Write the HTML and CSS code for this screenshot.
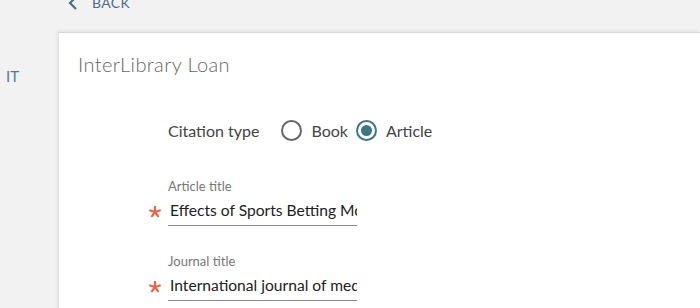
FILE: index.html
```html
<!doctype html>
<html lang="en">

<head>
    <meta charset="utf-8" />
    <meta name="viewport" content="width=device-width, initial-scale=1.0" />
    <title>InterLibrary Loan</title>
    <link rel="stylesheet" href="styles.css">
</head>

<body>
    <div class="top-bar">
        <a class="back-link" href="#">
            <svg class="back-icon" width="10" height="14" viewBox="0 0 10 14">
                <path d="M8 1 L2 7 L8 13" fill="none" stroke="currentColor" stroke-width="2.2" />
            </svg>
            BACK
        </a>
    </div>

    <div class="layout">
        <div class="side-nav">
            <div class="side-item">IT</div>
        </div>

        <div class="panel">
            <h2 class="panel-title">InterLibrary Loan</h2>

            <form class="ill-form">
                <div class="citation-row">
                    <span class="citation-label">Citation type</span>
                    <label class="radio">
                        <span class="radio-circle"></span>
                        Book
                    </label>
                    <label class="radio checked">
                        <span class="radio-circle"></span>
                        Article
                    </label>
                </div>

                <div class="field">
                    <div class="field-label">Article title</div>
                    <div class="field-row">
                        <svg class="required" width="12" height="12" viewBox="0 0 12 12" aria-label="required">
                            <path d="M6 1 V6 M6 6 L10.8 4.5 M6 6 L1.2 4.5 M6 6 L9 10.2 M6 6 L3 10.2" stroke="currentColor" stroke-width="2.2" stroke-linecap="round" fill="none" />
                        </svg>
                        <div class="field-input">Effects of Sports Betting Motivation on Behavioral Intention</div>
                    </div>
                </div>

                <div class="field">
                    <div class="field-label">Journal title</div>
                    <div class="field-row">
                        <svg class="required" width="12" height="12" viewBox="0 0 12 12" aria-label="required">
                            <path d="M6 1 V6 M6 6 L10.8 4.5 M6 6 L1.2 4.5 M6 6 L9 10.2 M6 6 L3 10.2" stroke="currentColor" stroke-width="2.2" stroke-linecap="round" fill="none" />
                        </svg>
                        <div class="field-input">International journal of media</div>
                    </div>
                </div>
            </form>
        </div>
    </div>
</body>

</html>
```

FILE: styles.css
```css
html,
body {
    margin: 0;
    height: 100%;
    overflow: hidden;
}

body {
    background: #f2f2f2;
    font-family: "Lato", "Open Sans", sans-serif;
    color: #333;
}

/* Top bar with back link, mostly scrolled out of view */
.top-bar {
    height: 16px;
    margin-top: -5px;
    padding-left: 68px;
}

.back-link {
    display: flex;
    align-items: center;
    gap: 14px;
    color: #4d6b8a;
    text-decoration: none;
    font-size: 14px;
    line-height: 16px;
    letter-spacing: 0.3px;
}

.back-icon {
    display: block;
}

.layout {
    display: flex;
    margin-top: 21px;
    height: 280px;
}

/* Left navigation */
.side-nav {
    width: 58px;
    flex-shrink: 0;
    padding-top: 35px;
}

.side-item {
    padding-left: 6px;
    color: #5a7894;
    font-size: 15px;
    line-height: 18px;
}

/* Main panel */
.panel {
    flex: 1;
    background: #fff;
    border-top: 1px solid #d4d4d4;
    border-left: 1px solid #e2e2e2;
    box-shadow: -1px -1px 3px rgba(0, 0, 0, 0.08);
    padding: 0 19px;
}

.panel-title {
    margin: 19px 0 0;
    font-size: 20px;
    font-weight: 300;
    line-height: 24px;
    letter-spacing: 0.4px;
    color: #666;
}

.ill-form {
    padding-left: 90px;
    margin-top: 42px;
}

.citation-row {
    display: flex;
    align-items: center;
    font-size: 16px;
    color: #444;
    height: 24px;
}

.citation-label {
    margin-right: 22px;
}

.radio {
    display: flex;
    align-items: center;
    gap: 9px;
    margin-right: 8px;
}

.radio-circle {
    width: 17px;
    height: 17px;
    border: 2px solid #666;
    border-radius: 50%;
    position: relative;
}

.radio.checked .radio-circle {
    border-color: #3b7682;
}

.radio.checked .radio-circle::after {
    content: "";
    position: absolute;
    left: 3px;
    top: 3px;
    width: 11px;
    height: 11px;
    border-radius: 50%;
    background: #3b7682;
}

/* Text fields */
.field {
    margin-top: 36px;
}

.field + .field {
    margin-top: 27px;
}

.field-label {
    font-size: 13px;
    line-height: 16px;
    color: #777;
}

.field-row {
    display: flex;
    align-items: flex-start;
    margin-left: -19px;
    margin-top: 6px;
}

.required {
    flex-shrink: 0;
    margin: 6px 7px 0 0;
    color: #f05f4a;
}

.field-input {
    width: 187px;
    white-space: nowrap;
    overflow: hidden;
    text-overflow: clip;
    font-size: 15.6px;
    line-height: 20px;
    padding-bottom: 5px;
    color: #222;
    padding-left: 2px;
    border-bottom: 1px solid #888;
}
```
